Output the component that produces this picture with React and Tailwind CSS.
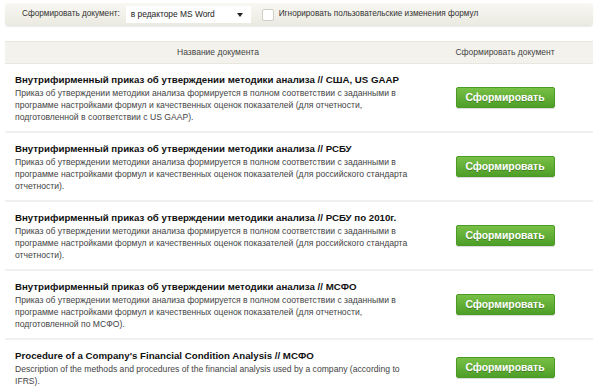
const docs = [
  {
    title: 'Внутрифирменный приказ об утверждении методики анализа // США, US GAAP',
    text: 'Приказ об утверждении методики анализа формируется в полном соответствии с заданными в программе настройками формул и качественных оценок показателей (для отчетности, подготовленной в соответствии с US GAAP).',
  },
  {
    title: 'Внутрифирменный приказ об утверждении методики анализа // РСБУ',
    text: 'Приказ об утверждении методики анализа формируется в полном соответствии с заданными в программе настройками формул и качественных оценок показателей (для российского стандарта отчетности).',
  },
  {
    title: 'Внутрифирменный приказ об утверждении методики анализа // РСБУ по 2010г.',
    text: 'Приказ об утверждении методики анализа формируется в полном соответствии с заданными в программе настройками формул и качественных оценок показателей (для российского стандарта отчетности).',
  },
  {
    title: 'Внутрифирменный приказ об утверждении методики анализа // МСФО',
    text: 'Приказ об утверждении методики анализа формируется в полном соответствии с заданными в программе настройками формул и качественных оценок показателей (для отчетности, подготовленной по МСФО).',
  },
  {
    title: "Procedure of a Company's Financial Condition Analysis // МСФО",
    text: 'Description of the methods and procedures of the financial analysis used by a company (according to IFRS).',
  },
];

const App = () => {
  return (
    <div className="w-[600px] h-[387px] overflow-hidden bg-white font-['Liberation_Sans',Arial,sans-serif] pt-[3px] px-[5px]">
      {/* Toolbar */}
      <div className="w-[588px] h-[23px] flex items-center rounded-[3px] bg-gradient-to-b from-[#f8f7f2] to-[#ebeae1] shadow-[0_1px_1px_rgba(0,0,0,0.08)] text-[8.2px] text-[#333]">
        <span className="ml-[17px] mr-[6px]">Сформировать документ:</span>
        <div className="w-[125px] h-[17px] bg-white flex items-center justify-between pl-[5px] pr-[8px]">
          <span className="text-[#222] text-[8.4px]">в редакторе MS Word</span>
          <span className="w-0 h-0 border-l-[3px] border-r-[3px] border-t-[4px] border-l-transparent border-r-transparent border-t-[#222]" />
        </div>
        <span className="ml-[11px] w-[12px] h-[12px] rounded-[2px] bg-white border border-[#cfcfc8]" />
        <span className="ml-[5px]">Игнорировать пользовательские изменения формул</span>
      </div>

      {/* Table header */}
      <div className="mt-[15px] w-[588px] h-[23px] grid grid-cols-[426px_1fr] items-center bg-[#f3f2ed] border-y border-[#e7e6df] text-[8.5px] text-[#444]">
        <div className="text-center">Название документа</div>
        <div className="text-center pr-[14px]">Сформировать документ</div>
      </div>

      {/* Rows */}
      {docs.map((d, i) => (
        <div
          key={i}
          className="w-[588px] grid grid-cols-[426px_1fr] items-center border-b-2 border-[#f0f0ee]"
        >
          <div className="pl-[10px] pr-[12px] pt-[9px] pb-[8px]">
            <div className="text-[9.7px] font-bold text-[#111] leading-[14px] whitespace-nowrap">{d.title}</div>
            <div className="text-[8.6px] text-[#444] leading-[12px]">{d.text}</div>
          </div>
          <div className="flex justify-center pr-[14px]">
            <button className="w-[99px] h-[21px] rounded-[2px] border border-[#4a9a25] bg-gradient-to-b from-[#78c046] to-[#4d9e27] text-white text-[10.4px] font-bold [text-shadow:0_1px_0_rgba(0,0,0,0.25)] shadow-[0_1px_1px_rgba(0,0,0,0.15)]">
              Сформировать
            </button>
          </div>
        </div>
      ))}
    </div>
  );
};

export default App;
